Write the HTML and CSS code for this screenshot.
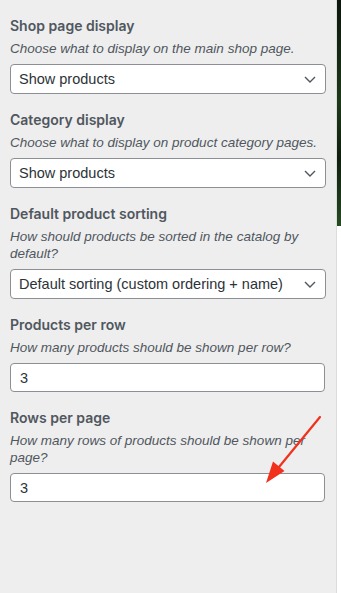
FILE: index.html
```html
<!DOCTYPE html>
<html lang="en">
<head>
    <meta charset="UTF-8">
    <title>Product catalog</title>
    <link rel="stylesheet" href="styles.css">
</head>
<body>
<div class="page">
    <!--customizer sidebar-->
    <div class="panel">
        <div class="control">
            <span class="title">Shop page display</span>
            <span class="desc">Choose what to display on the main shop page.</span>
            <select class="field">
                <option>Show products</option>
            </select>
        </div>
        <div class="control">
            <span class="title">Category display</span>
            <span class="desc">Choose what to display on product category pages.</span>
            <select class="field">
                <option>Show products</option>
            </select>
        </div>
        <div class="control">
            <span class="title">Default product sorting</span>
            <span class="desc">How should products be sorted in the catalog by default?</span>
            <select class="field">
                <option>Default sorting (custom ordering + name)</option>
            </select>
        </div>
        <div class="control">
            <span class="title">Products per row</span>
            <span class="desc">How many products should be shown per row?</span>
            <input class="field text" type="number" value="3">
        </div>
        <div class="control">
            <span class="title">Rows per page</span>
            <span class="desc">How many rows of products should be shown per page?</span>
            <input class="field text" type="number" value="3">
        </div>
        <!--red arrow annotation-->
        <svg class="arrow" width="337" height="593" viewBox="0 0 337 593">
            <line x1="320" y1="417" x2="279" y2="467" stroke="#f2311d" stroke-width="2.2" stroke-linecap="round"/>
            <polygon points="266,483 284.5,471 273,461.5" fill="#f2311d"/>
        </svg>
    </div>
    <!--preview side-->
    <div class="preview">
        <div class="hero"></div>
    </div>
</div>
</body>
</html>
```

FILE: styles.css
```css
* {
    margin: 0;
    padding: 0;
    box-sizing: border-box;
}

body {
    font-family: "Liberation Sans", Arial, sans-serif;
    background: #fff;
}

.page {
    display: flex;
    min-height: 100vh;
}

/*sidebar*/
.panel {
    width: 337px;
    flex-shrink: 0;
    background-color: #eeeeee;
    border-right: 1px solid #dcdcde;
    padding: 15px 10px 0 10px;
    position: relative;
}

.control {
    display: flex;
    flex-direction: column;
    margin-bottom: 15px;
}

.title {
    font-family: Inter, "Liberation Sans", sans-serif;
    font-size: 14px;
    line-height: 21px;
    font-weight: 600;
    color: #50575e;
    margin-bottom: 4px;
}

.desc {
    font-size: 13.5px;
    line-height: 17px;
    font-style: italic;
    color: #50575e;
    margin-bottom: 7px;
}

.field {
    width: 100%;
    height: 30px;
    border: 1px solid #8c8f94;
    border-radius: 4px;
    background-color: #fff;
    font-family: inherit;
    font-size: 14.5px;
    color: #2c3338;
    padding: 0 24px 0 8px;
    appearance: none;
    -webkit-appearance: none;
    background-image: url("data:image/svg+xml,%3Csvg xmlns='http://www.w3.org/2000/svg' width='12' height='7' viewBox='0 0 12 7'%3E%3Cpath d='M1 1l5 5 5-5' fill='none' stroke='%2350575e' stroke-width='1.4'/%3E%3C/svg%3E");
    background-repeat: no-repeat;
    background-position: right 9px center;
}

.text {
    width: calc(100% - 1px);
    height: 29px;
    padding: 0 9px;
    background-image: none;
    -moz-appearance: textfield;
}

.text::-webkit-inner-spin-button,
.text::-webkit-outer-spin-button {
    -webkit-appearance: none;
}

.arrow {
    position: absolute;
    left: 0;
    top: 0;
    pointer-events: none;
}

/*preview*/
.preview {
    flex: 1;
    background: #fff;
}

.hero {
    height: 226px;
    background: linear-gradient(160deg, #0b150b 0%, #1d3a18 45%, #0e1f0c 70%, #264b22 100%);
}
```
